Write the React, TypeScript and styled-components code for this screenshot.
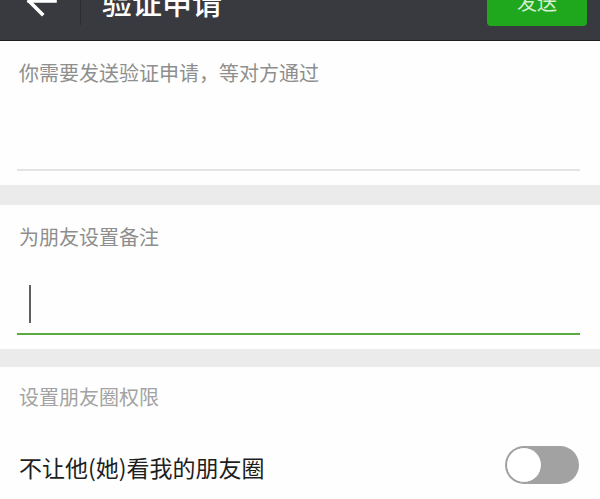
import React from "react";
import styled, { createGlobalStyle } from "styled-components";

const GlobalStyle = createGlobalStyle`
  html, body {
    margin: 0;
    padding: 0;
    background: #ebebeb;
    overflow: hidden;
  }
  body {
    font-family: "Noto Sans CJK SC", "Noto Sans", sans-serif;
  }
`;

const Screen = styled.div`
  width: 600px;
  margin-top: -40px;
  display: flex;
  flex-direction: column;
  background: #ebebeb;
`;

const Header = styled.header`
  height: 80px;
  background: #393a3f;
  border-bottom: 1px solid #1f2023;
  display: flex;
  align-items: center;
  padding-left: 25px;
  padding-right: 13px;
`;

const BackButton = styled.div`
  width: 32px;
  height: 32px;
  display: flex;
  align-items: center;
  justify-content: center;
  margin-top: 2px;
`;

const Divider = styled.div`
  width: 1px;
  height: 50px;
  background: #2c2d31;
  margin-left: 23px;
`;

const Title = styled.h1`
  margin: 0 0 0 21px;
  font-size: 30px;
  line-height: 32px;
  font-weight: 500;
  color: #ffffff;
  margin-top: 2px;
`;

const SendButton = styled.button`
  margin-left: auto;
  width: 100px;
  height: 52px;
  border: none;
  border-radius: 4px;
  background: #1fa81e;
  color: #d6eed2;
  font-family: inherit;
  font-size: 20px;
  line-height: 24px;
  padding: 4px 0 0;
`;

const Section = styled.section<{ $top?: number; $bottom?: number }>`
  background: #fdfefd;
  padding: ${(p) => p.$top ?? 18}px 20px ${(p) => p.$bottom ?? 14}px 17px;
  display: flex;
  flex-direction: column;
`;

const Gap = styled.div<{ $h: number }>`
  height: ${(p) => p.$h}px;
  background: #ebebeb;
`;

const Label = styled.div<{ $tone?: "mid" | "light" }>`
  font-size: 20px;
  line-height: 28px;
  padding-left: 2px;
  color: ${(p) => (p.$tone === "light" ? "#a3a3a3" : "#8e8e8e")};
`;

const Field = styled.div<{ $height: number; $active?: boolean }>`
  height: ${(p) => p.$height}px;
  border-bottom: 2px solid ${(p) => (p.$active ? "#5aab44" : "#e4e4e4")};
  display: flex;
  align-items: flex-start;
`;

const Caret = styled.div`
  width: 1.5px;
  height: 38px;
  background: #606060;
  margin-left: 12px;
  margin-top: 34px;
`;

const Row = styled.div`
  display: flex;
  align-items: center;
  justify-content: space-between;
  height: 108px;
  padding-right: 1px;
`;

const RowText = styled.span`
  font-size: 23px;
  line-height: 32px;
  color: #1e1e1e;
  padding-left: 2px;
  margin-top: 3px;
`;

const Switch = styled.div<{ $on?: boolean }>`
  width: 74px;
  height: 38px;
  border-radius: 19px;
  background: ${(p) => (p.$on ? "#1fa81e" : "#a2a2a2")};
  display: flex;
  align-items: center;
  padding: 1px;
  box-sizing: border-box;
`;

const Knob = styled.div`
  width: 36px;
  height: 36px;
  border-radius: 50%;
  background: #ffffff;
  box-sizing: border-box;
  border: 1px solid #9a9a9a;
`;

const BackArrow = () => (
  <svg width="32" height="32" viewBox="0 0 32 32" fill="none">
    <path
      d="M30 16H4M4 16L17 3M4 16L17 29"
      stroke="#ffffff"
      strokeWidth="3.6"
      strokeLinecap="square"
    />
  </svg>
);

export default function App() {
  return (
    <>
      <GlobalStyle />
      <Screen>
        <Header>
          <BackButton>
            <BackArrow />
          </BackButton>
          <Divider />
          <Title>验证申请</Title>
          <SendButton>发送</SendButton>
        </Header>

        <Section>
          <Field $height={110}>
            <Label>你需要发送验证申请，等对方通过</Label>
          </Field>
        </Section>
        <Gap $h={20} />

        <Section>
          <Label>为朋友设置备注</Label>
          <Field $height={82} $active>
            <Caret />
          </Field>
        </Section>
        <Gap $h={18} />

        <Section $top={16} $bottom={0}>
          <Label $tone="light">设置朋友圈权限</Label>
          <Row>
            <RowText>不让他(她)看我的朋友圈</RowText>
            <Switch>
              <Knob />
            </Switch>
          </Row>
        </Section>
      </Screen>
    </>
  );
}
